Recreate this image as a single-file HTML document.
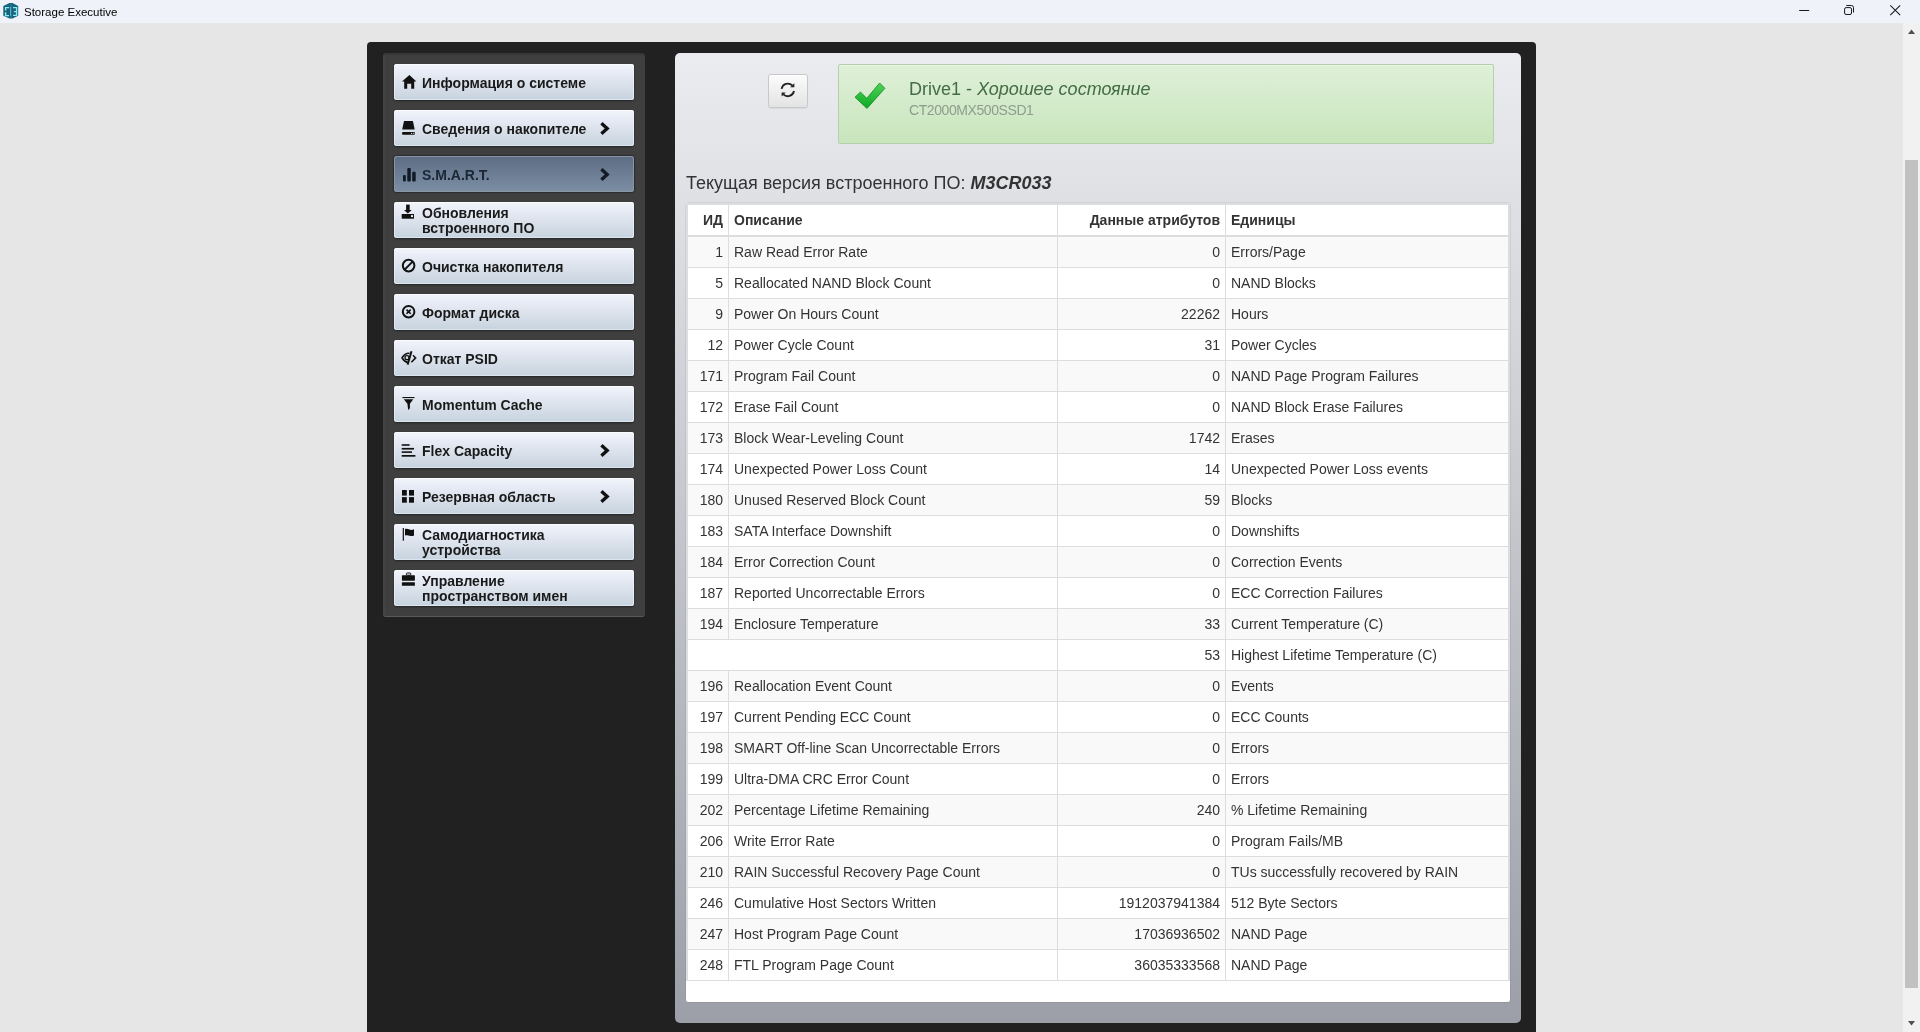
<!DOCTYPE html>
<html><head><meta charset="utf-8">
<style>
*{box-sizing:border-box;margin:0;padding:0}
html,body{width:1920px;height:1032px;overflow:hidden}
body{background:#e6e6e6;font-family:"Liberation Sans",sans-serif;position:relative;color:#333}
.abs{position:absolute}
#titlebar{left:0;top:0;width:1920px;height:23px;background:#eff2f9}
#titletext{left:24px;top:4px;font-size:11.5px;color:#000;line-height:16px;white-space:nowrap}
#scroll{left:1903px;top:23px;width:17px;height:1009px;background:#f1f1f1}
#thumb{left:1905px;top:160px;width:13px;height:828px;background:#c1c1c1}
#dark{left:367px;top:42px;width:1169px;height:1000px;background:#212121;border-radius:4px 4px 0 0}
#side{left:383px;top:53px;width:262px;height:564px;background:#3f3f3f;border-radius:3px;border-bottom:1px solid #595959;box-shadow:inset 0 2px 1px rgba(0,0,0,.13),inset 2px 0 1px rgba(255,255,255,.03)}
.btn{position:absolute;left:394px;width:240px;height:36px;border-radius:3px;background:linear-gradient(#f3f5fb,#e7ebf5 25%,#d6dee8 65%,#c6d3df);box-shadow:inset 0 1px 0 #fafbfd,inset 1px 0 0 rgba(240,245,250,.5),inset -1px 0 0 rgba(240,245,250,.7),inset 0 -1px 0 rgba(222,232,240,.9),0 1px 2px rgba(0,0,0,.45);font-weight:bold;font-size:14px;color:#1a1a1a;white-space:nowrap}
.btn.act{background:linear-gradient(#5c6c83,#7c8fa5);color:#1b2636;box-shadow:inset 0 0 0 1px #8995a3,0 0 1px 1px rgba(25,30,40,.55)}
.btn .lbl{position:absolute;left:28px;top:11px;line-height:16px}
.btn .lbl2{position:absolute;left:28px;top:4px;line-height:15px}
.btn svg{position:absolute;left:0;top:0}
.btn svg.chev{position:absolute;left:204px;top:10px}
#content{left:675px;top:53px;width:846px;height:970px;border-radius:5px;background:linear-gradient(#ebecef,#9c9fa8)}
#refresh{left:768px;top:74px;width:40px;height:34px;border:1px solid #c8c8c8;border-radius:3px;background:linear-gradient(#fcfcfc,#e3e3e3);box-shadow:inset 0 1px 0 #fff,0 1px 1px rgba(0,0,0,.06)}
#alert{left:838px;top:64px;width:656px;height:80px;border:1px solid #b4cfad;border-radius:2px;background:linear-gradient(#dff0d8,#c8e5bc);box-shadow:inset 0 1px 0 rgba(255,255,255,.35)}
#drv{left:909px;top:78px;font-size:18px;line-height:22px;color:#436d45;white-space:nowrap}
#model{left:909px;top:102px;font-size:14px;letter-spacing:-0.42px;line-height:16px;color:#8e9d8e;white-space:nowrap}
#fw{left:686px;top:172px;font-size:18px;line-height:22px;color:#333;white-space:nowrap}
#tbox{left:686px;top:203px;width:824px;height:799px;background:#fff;border-radius:2px;box-shadow:0 0 0 0.5px rgba(0,0,0,0.12)}
#tbord{left:686px;top:203px;width:824px;height:778px;border:2px solid #dcdde0;border-bottom:none}
table{position:absolute;left:688px;top:205px;width:820px;border-collapse:separate;border-spacing:0;font-size:14px;line-height:20px;color:#333;table-layout:fixed}
td,th{padding:5px;border-left:1px solid #ddd;white-space:nowrap;overflow:hidden}
td:first-child,th:first-child{border-left:none}
th{font-weight:bold;text-align:left;border-bottom:2px solid #ddd}
td{border-bottom:1px solid #ddd}
.r{text-align:right}
tbody tr:nth-child(odd) td{background:#f9f9f9}
.lbl,.lbl2,#drv,#model,#fw,#titletext,table{will-change:transform}
</style></head><body>
<div id="titlebar" class="abs"></div>
<svg class="abs" style="left:2px;top:2px" width="18" height="18" viewBox="0 0 18 18">
<polygon points="7.5,1 10.5,1 16.2,4 16.2,13.8 10.5,16.6 7.5,16.6 1.3,13.8 1.3,4" fill="#176378"/>
<path d="M7.2,5.6H3.6V8.6M3.6,10.2V13.6H7" fill="none" stroke="#86e9f6" stroke-width="1.4"/>
<path d="M11,5.6H14.6V13.4H11M11.8,9.6H14.6" fill="none" stroke="#86e9f6" stroke-width="1.4"/>
<rect x="8.1" y="2" width="2" height="13.8" fill="#22759a"/><rect x="8.1" y="5" width="0.6" height="9" fill="#7fd8ee"/>
</svg>
<div id="titletext" class="abs">Storage Executive</div>
<svg class="abs" style="left:1790px;top:0" width="130" height="23" viewBox="0 0 130 23">
<rect x="9.2" y="10" width="10" height="1" fill="#1a1a1a"/>
<rect x="54.6" y="7.6" width="6.9" height="6.9" rx="1.5" fill="none" stroke="#1a1a1a" stroke-width="1"/>
<path d="M56.3,5.5H61.5a2,2 0 0 1 2,2V12.5" fill="none" stroke="#1a1a1a" stroke-width="1"/>
<path d="M100.3,5.3L110.2,15.2M110.2,5.3L100.3,15.2" stroke="#1a1a1a" stroke-width="1.05"/>
</svg>
<div id="scroll" class="abs"></div>
<div id="thumb" class="abs"></div>
<svg class="abs" style="left:1903px;top:23px" width="17" height="1009" viewBox="0 0 17 1009">
<polygon points="5,11 8.5,6.5 12,11" fill="#505050"/>
<polygon points="5,998 12,998 8.5,1002.5" fill="#505050"/>
</svg>

<div id="dark" class="abs"></div>
<div id="side" class="abs"></div>

<!-- BUTTONS -->
<div class="btn" style="top:64px"><svg width="27" height="36"><path d="M15.4,11L8,17.6h2.2V24.8h3V19.7h4V24.8h3V17.6h2.2z" fill="#111"/></svg><span class="lbl">Информация о системе</span></div>
<div class="btn" style="top:110px"><svg width="27" height="36"><path d="M10,11H18.9L20.7,19.6H8.2z" fill="#111"/><rect x="8" y="22" width="13" height="2.8" rx="1.2" fill="#111"/><circle cx="17.6" cy="23.4" r="0.6" fill="#dfe5ee"/><circle cx="19.8" cy="23.4" r="0.6" fill="#dfe5ee"/></svg><span class="lbl">Сведения о накопителе</span><svg class="chev" width="16" height="18" viewBox="0 0 16 18"><path d="M3.4,3.3L9.2,8.5L3.4,13.8" fill="none" stroke="#111" stroke-width="3.3"/></svg></div>
<div class="btn act" style="top:156px"><svg width="27" height="36"><rect x="9" y="19" width="2.8" height="6.4" rx="1" fill="#111a26"/><rect x="13.3" y="12" width="3.5" height="13.4" rx="1" fill="#111a26"/><rect x="18.2" y="15.8" width="3.5" height="9.6" rx="1" fill="#111a26"/></svg><span class="lbl">S.M.A.R.T.</span><svg class="chev" width="16" height="18" viewBox="0 0 16 18"><path d="M3.4,3.3L9.2,8.5L3.4,13.8" fill="none" stroke="#111a26" stroke-width="3.3"/></svg></div>
<div class="btn" style="top:202px"><svg width="27" height="36"><rect x="12.1" y="2.6" width="3.6" height="6" fill="#111"/><polygon points="10,8 17.7,8 13.85,11.5" fill="#111"/><rect x="7.7" y="12" width="12.3" height="4.7" fill="#111"/><rect x="17" y="13.1" width="2" height="2" fill="#e8edf4"/></svg><span class="lbl2">Обновления<br>встроенного ПО</span></div>
<div class="btn" style="top:248px"><svg width="27" height="36"><circle cx="14.6" cy="17.6" r="5.8" fill="none" stroke="#111" stroke-width="2"/><path d="M10.6,21.6L18.6,13.6" stroke="#111" stroke-width="2"/></svg><span class="lbl">Очистка накопителя</span></div>
<div class="btn" style="top:294px"><svg width="27" height="36"><circle cx="14.6" cy="17.7" r="5.8" fill="none" stroke="#111" stroke-width="2"/><path d="M12.5,15.6L16.7,19.8M16.7,15.6L12.5,19.8" stroke="#111" stroke-width="1.6"/></svg><span class="lbl">Формат диска</span></div>
<div class="btn" style="top:340px"><svg width="27" height="36"><path d="M15.5,13.3C12,13 9.5,15.5 8,17.9C9.5,20.3 11.5,22.2 13.8,22.6" fill="none" stroke="#111" stroke-width="1.7"/><circle cx="13" cy="17.7" r="2" fill="none" stroke="#111" stroke-width="1.3"/><path d="M13.6,24.6L17.5,11.2" stroke="#111" stroke-width="2"/><path d="M19,15.3L21.6,17.9L17.4,22.2" fill="none" stroke="#111" stroke-width="1.6"/></svg><span class="lbl">Откат PSID</span></div>
<div class="btn" style="top:386px"><svg width="27" height="36"><rect x="8.4" y="11" width="12.1" height="1.1" fill="#111"/><path d="M9.8,13.2H19.3L15.9,17.8V22.3L14.2,23.9L13.4,17.8z" fill="#111"/></svg><span class="lbl">Momentum Cache</span></div>
<div class="btn" style="top:432px"><svg width="27" height="36"><rect x="7.7" y="12.2" width="7.9" height="1.6" fill="#111"/><rect x="7.7" y="15.9" width="12.3" height="1.7" fill="#111"/><rect x="7.7" y="19.3" width="10.3" height="1.6" fill="#111"/><rect x="7.7" y="23" width="13.7" height="1.7" fill="#111"/></svg><span class="lbl">Flex Capacity</span><svg class="chev" width="16" height="18" viewBox="0 0 16 18"><path d="M3.4,3.3L9.2,8.5L3.4,13.8" fill="none" stroke="#111" stroke-width="3.3"/></svg></div>
<div class="btn" style="top:478px"><svg width="27" height="36"><rect x="8" y="12" width="4.8" height="5.6" fill="#111"/><rect x="15" y="12" width="5" height="5.6" fill="#111"/><rect x="8" y="19.1" width="4.8" height="5.6" fill="#111"/><rect x="15" y="19.1" width="5" height="5.6" fill="#111"/></svg><span class="lbl">Резервная область</span><svg class="chev" width="16" height="18" viewBox="0 0 16 18"><path d="M3.4,3.3L9.2,8.5L3.4,13.8" fill="none" stroke="#111" stroke-width="3.3"/></svg></div>
<div class="btn" style="top:524px"><svg width="27" height="36"><rect x="8.7" y="4" width="1.3" height="12.7" fill="#222"/><path d="M11,5C12.5,4.6 14,5 15.5,5.6C17,6.1 18.5,5.9 20,5.2V11.5C18.5,12.2 17,12.2 15.5,11.7C14,11.1 12.5,11 11,11.6z" fill="#111"/></svg><span class="lbl2">Самодиагностика<br>устройства</span></div>
<div class="btn" style="top:570px"><svg width="27" height="36"><rect x="12.4" y="3" width="4.4" height="2.2" rx="0.8" fill="none" stroke="#111" stroke-width="1"/><rect x="7.9" y="5.2" width="13" height="5.5" rx="0.6" fill="#111"/><rect x="7.9" y="12.2" width="13" height="3.6" rx="0.6" fill="#111"/></svg><span class="lbl2">Управление<br>пространством имен</span></div>

<div id="content" class="abs"></div>
<div id="refresh" class="abs"><svg width="38" height="32" viewBox="0 0 38 32"><path d="M12.6,13.8A6.3,6.3 0 0 1 23.25,10.45" fill="none" stroke="#222" stroke-width="1.8"/><polygon points="25.3,8.2 25.3,12.3 21.2,12.3" fill="#222"/><path d="M25,16A6.3,6.3 0 0 1 14.35,19.35" fill="none" stroke="#222" stroke-width="1.8"/><polygon points="12.6,17.5 12.6,21.6 16.7,17.5" fill="#222"/></svg></div>
<div id="alert" class="abs"></div>
<svg class="abs" style="left:848px;top:74px" width="44" height="44" viewBox="848 74 44 44">
<defs><linearGradient id="gg" x1="0" y1="0" x2="0" y2="1"><stop offset="0" stop-color="#4fd35a"/><stop offset="1" stop-color="#0ca822"/></linearGradient></defs>
<polygon points="855,97.2 860.4,92.1 866.8,98.3 879.6,83 884.9,88.3 867,108.5" fill="url(#gg)" stroke="#138a24" stroke-width="0.8" stroke-linejoin="round"/>
</svg>
<div id="drv" class="abs">Drive1 - <i>Хорошее состояние</i></div>
<div id="model" class="abs">CT2000MX500SSD1</div>
<div id="fw" class="abs">Текущая версия встроенного ПО: <b><i>M3CR033</i></b></div>
<div id="tbox" class="abs"></div><div id="tbord" class="abs"></div>
<table>
<colgroup><col style="width:40px"><col style="width:329px"><col style="width:168px"><col style="width:283px"></colgroup>
<thead><tr><th class="r">ИД</th><th>Описание</th><th class="r">Данные атрибутов</th><th>Единицы</th></tr></thead>
<tbody>
<tr><td class="r">1</td><td>Raw Read Error Rate</td><td class="r">0</td><td>Errors/Page</td></tr>
<tr><td class="r">5</td><td>Reallocated NAND Block Count</td><td class="r">0</td><td>NAND Blocks</td></tr>
<tr><td class="r">9</td><td>Power On Hours Count</td><td class="r">22262</td><td>Hours</td></tr>
<tr><td class="r">12</td><td>Power Cycle Count</td><td class="r">31</td><td>Power Cycles</td></tr>
<tr><td class="r">171</td><td>Program Fail Count</td><td class="r">0</td><td>NAND Page Program Failures</td></tr>
<tr><td class="r">172</td><td>Erase Fail Count</td><td class="r">0</td><td>NAND Block Erase Failures</td></tr>
<tr><td class="r">173</td><td>Block Wear-Leveling Count</td><td class="r">1742</td><td>Erases</td></tr>
<tr><td class="r">174</td><td>Unexpected Power Loss Count</td><td class="r">14</td><td>Unexpected Power Loss events</td></tr>
<tr><td class="r">180</td><td>Unused Reserved Block Count</td><td class="r">59</td><td>Blocks</td></tr>
<tr><td class="r">183</td><td>SATA Interface Downshift</td><td class="r">0</td><td>Downshifts</td></tr>
<tr><td class="r">184</td><td>Error Correction Count</td><td class="r">0</td><td>Correction Events</td></tr>
<tr><td class="r">187</td><td>Reported Uncorrectable Errors</td><td class="r">0</td><td>ECC Correction Failures</td></tr>
<tr><td class="r">194</td><td>Enclosure Temperature</td><td class="r">33</td><td>Current Temperature (C)</td></tr>
<tr><td colspan="2"></td><td class="r">53</td><td>Highest Lifetime Temperature (C)</td></tr>
<tr><td class="r">196</td><td>Reallocation Event Count</td><td class="r">0</td><td>Events</td></tr>
<tr><td class="r">197</td><td>Current Pending ECC Count</td><td class="r">0</td><td>ECC Counts</td></tr>
<tr><td class="r">198</td><td>SMART Off-line Scan Uncorrectable Errors</td><td class="r">0</td><td>Errors</td></tr>
<tr><td class="r">199</td><td>Ultra-DMA CRC Error Count</td><td class="r">0</td><td>Errors</td></tr>
<tr><td class="r">202</td><td>Percentage Lifetime Remaining</td><td class="r">240</td><td>% Lifetime Remaining</td></tr>
<tr><td class="r">206</td><td>Write Error Rate</td><td class="r">0</td><td>Program Fails/MB</td></tr>
<tr><td class="r">210</td><td>RAIN Successful Recovery Page Count</td><td class="r">0</td><td>TUs successfully recovered by RAIN</td></tr>
<tr><td class="r">246</td><td>Cumulative Host Sectors Written</td><td class="r">1912037941384</td><td>512 Byte Sectors</td></tr>
<tr><td class="r">247</td><td>Host Program Page Count</td><td class="r">17036936502</td><td>NAND Page</td></tr>
<tr><td class="r">248</td><td>FTL Program Page Count</td><td class="r">36035333568</td><td>NAND Page</td></tr>
</tbody></table>
</body></html>
